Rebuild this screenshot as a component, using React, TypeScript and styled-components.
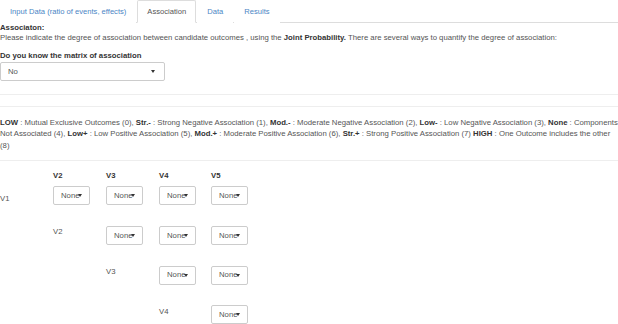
import React from "react";
import styled, { createGlobalStyle } from "styled-components";

const Global = createGlobalStyle`
  html, body { margin: 0; padding: 0; background: #fff; }
  body {
    font-family: "Liberation Sans", Arial, Helvetica, sans-serif;
    font-size: 7.74px;
    line-height: 11.4px;
    color: #555;
  }
  * { box-sizing: border-box; }
`;

const Page = styled.div`
  width: 618px;
  height: 324px;
  overflow: hidden;
`;

const TabBar = styled.ul`
  display: flex;
  list-style: none;
  margin: 0;
  padding: 0;
  height: 23px;
  border-bottom: 1px solid #ddd;
`;

const Tab = styled.li<{ $active?: boolean }>`
  padding: 0 9px;
  height: 23px;
  line-height: 22px;
  font-size: 7.6px;
  margin-right: 1px;
  color: ${(p) => (p.$active ? "#555" : "#4a86c5")};
  background: #fff;
  border: 1px solid ${(p) => (p.$active ? "#ddd" : "transparent")};
  border-bottom-color: ${(p) => (p.$active ? "#fff" : "transparent")};
  border-radius: 2px 2px 0 0;
  white-space: nowrap;
`;

const Content = styled.div`
  margin-top: -0.5px;
`;

const Title = styled.div`
  font-weight: bold;
  color: #333;
  line-height: 10px;
`;

const Para = styled.p`
  margin: 0;
  line-height: 10px;
`;

const Strong = styled.b`
  color: #333;
`;

const FieldLabel = styled.div`
  font-weight: bold;
  color: #333;
  margin-top: 7.5px;
  margin-bottom: 1px;
`;

const SelectBox = styled.div<{ $width: number }>`
  display: flex;
  align-items: center;
  width: ${(p) => p.$width}px;
  height: 19px;
  padding: 0 9px 0 7px;
  border: 1px solid #ccc;
  border-radius: 2px;
  background: #fff;
  color: #555;
  white-space: nowrap;
`;

const Caret = styled.span<{ $tight?: boolean }>`
  display: inline-block;
  width: 0;
  height: 0;
  border-left: 2.5px solid transparent;
  border-right: 2.5px solid transparent;
  border-top: 3px solid #333;
  margin-left: ${(p) => (p.$tight ? "-2px" : "auto")};
  flex-shrink: 0;
`;

const Rule = styled.hr<{ $top: number; $bottom: number }>`
  border: 0;
  border-top: 1px solid #eee;
  margin: ${(p) => p.$top}px 0 ${(p) => p.$bottom}px 0;
`;

const Legend = styled.p`
  margin: 0;
  line-height: 11.5px;
`;

const Matrix = styled.div`
  display: grid;
  grid-template-columns: 53px 53px 53px 52px 52px;
`;

const Head = styled.div`
  font-weight: bold;
  color: #333;
  height: 16.5px;
`;

const RowLabel = styled.div<{ $first?: boolean }>`
  padding-top: ${(p) => (p.$first ? 6.3 : 0.3)}px;
  color: #555;
  height: 39.7px;
`;

const Cell = styled.div`
  height: 39.7px;
`;

const Empty = styled.div``;

const vars = ["V1", "V2", "V3", "V4"];

export default function App() {
  return (
    <Page>
      <Global />
      <TabBar>
        <Tab>Input Data (ratio of events, effects)</Tab>
        <Tab $active>Association</Tab>
        <Tab>Data</Tab>
        <Tab>Results</Tab>
      </TabBar>
      <Content>
        <Title>Associaton:</Title>
        <Para>
          Please indicate the degree of association between candidate outcomes , using the{" "}
          <Strong>Joint Probability.</Strong> There are several ways to quantify the degree of
          association:
        </Para>
        <FieldLabel>Do you know the matrix of association</FieldLabel>
        <SelectBox $width={165}>
          No
          <Caret />
        </SelectBox>
        <Rule $top={13} $bottom={11} />
        <Rule $top={0} $bottom={9.3} />
        <Legend>
          <Strong>LOW</Strong> : Mutual Exclusive Outcomes (0), <Strong>Str.-</Strong> : Strong
          Negative Association (1), <Strong>Mod.-</Strong> : Moderate Negative Association (2),{" "}
          <Strong>Low-</Strong> : Low Negative Association (3), <Strong>None</Strong> : Components
          Not Associated (4), <Strong>Low+</Strong> : Low Positive Association (5),{" "}
          <Strong>Mod.+</Strong> : Moderate Positive Association (6), <Strong>Str.+</Strong> :
          Strong Positive Association (7) <Strong>HIGH</Strong> : One Outcome includes the other
          (8)
        </Legend>
        <Rule $top={9} $bottom={8.5} />
        <Matrix>
          <Empty />
          <Head>V2</Head>
          <Head>V3</Head>
          <Head>V4</Head>
          <Head>V5</Head>
          {vars.map((v, i) => (
            <React.Fragment key={v}>
              {Array.from({ length: i }).map((_, k) => (
                <Empty key={"e" + k} />
              ))}
              <RowLabel $first={i === 0}>{v}</RowLabel>
              {Array.from({ length: 4 - i }).map((_, k) => (
                <Cell key={"c" + k}>
                  <SelectBox $width={37}>
                    None
                    <Caret $tight />
                  </SelectBox>
                </Cell>
              ))}
            </React.Fragment>
          ))}
        </Matrix>
      </Content>
    </Page>
  );
}
